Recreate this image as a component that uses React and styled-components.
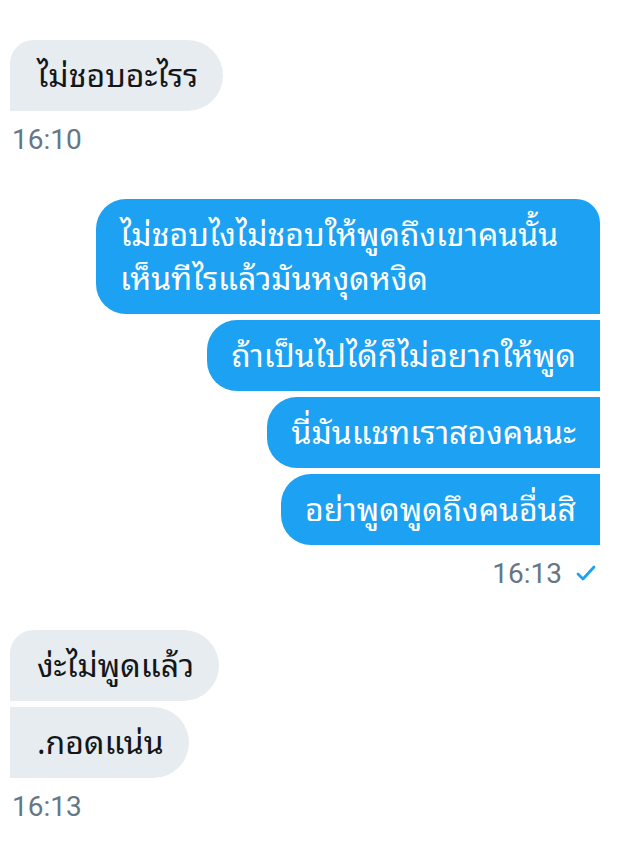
import React from "react";
import styled, { createGlobalStyle, css } from "styled-components";

const Global = createGlobalStyle`
  html, body { margin: 0; padding: 0; background: #ffffff; }
  body { font-family: "Noto Sans", "Noto Sans Thai Looped", Loma, Garuda, Waree, "Noto Sans Thai", Roboto, sans-serif; }
`;

const Page = styled.div`
  width: 624px;
  min-height: 850px;
  padding-top: 40px;
  box-sizing: border-box;
  display: flex;
  flex-direction: column;
`;

const Group = styled.div`
  display: flex;
  flex-direction: column;
  align-items: ${(p) => (p.$mine ? "flex-end" : "flex-start")};
  gap: 6px;
  padding: ${(p) => (p.$mine ? "0 24px 0 0" : "0 0 0 10px")};
  margin-bottom: ${(p) => p.$after || 0}px;
`;

const Bubble = styled.div`
  box-sizing: border-box;
  max-width: 504px;
  padding: 13px 24px 14px;
  font-size: 32px;
  line-height: 44px;
  white-space: nowrap;
  font-family: "Noto Sans", "Noto Sans Thai Looped", Loma, Garuda, Waree, "Noto Sans Thai", sans-serif;
  ${(p) =>
    p.$mine
      ? css`
          background: #1da1f2;
          color: #ffffff;
          border-radius: 30px ${p.$first ? "24px" : "0"} 0 30px;
        `
      : css`
          background: #e6ecf0;
          color: #14171a;
          padding-left: 27px;
          padding-right: 25px;
          border-radius: ${p.$first ? "24px" : "0"} 36px 36px 0;
        `}
  ${(p) => p.$wide && css`width: 504px;`}
`;

const Time = styled.div`
  display: flex;
  align-items: center;
  gap: 14px;
  margin-top: 6px;
  height: 32px;
  font-family: Roboto, "Liberation Sans", sans-serif;
  font-size: 28px;
  color: #657786;
  ${(p) => (p.$mine ? "margin-right: 4px;" : "margin-left: 2px;")}
`;

const Check = () => (
  <svg width="20" height="16" viewBox="0 0 20 16" fill="none">
    <path d="M2 9 L7 14 L18 2" stroke="#1da1f2" strokeWidth="2.8" strokeLinecap="round" strokeLinejoin="round" />
  </svg>
);

export default function App() {
  return (
    <Page>
      <Global />
      <Group $after={44}>
        <Bubble $first>ไม่ชอบอะไรร</Bubble>
        <Time>16:10</Time>
      </Group>
      <Group $mine $after={41}>
        <Bubble $mine $first $wide>
          ไม่ชอบไงไม่ชอบให้พูดถึงเขาคนนั้น
          <br />
          เห็นทีไรแล้วมันหงุดหงิด
        </Bubble>
        <Bubble $mine>ถ้าเป็นไปได้ก็ไม่อยากให้พูด</Bubble>
        <Bubble $mine>นี่มันแชทเราสองคนนะ</Bubble>
        <Bubble $mine>อย่าพูดพูดถึงคนอื่นสิ</Bubble>
        <Time $mine>
          16:13
          <Check />
        </Time>
      </Group>
      <Group>
        <Bubble $first>ง่ะไม่พูดแล้ว</Bubble>
        <Bubble>.กอดแน่น</Bubble>
        <Time>16:13</Time>
      </Group>
    </Page>
  );
}
